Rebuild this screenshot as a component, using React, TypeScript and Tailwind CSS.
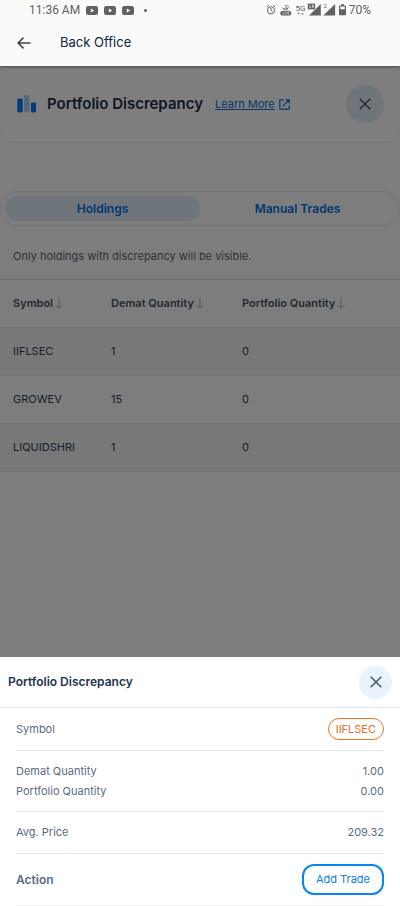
import { useState } from 'react';

const holdings = [
  { symbol: 'IIFLSEC', demat: 1, portfolio: 0 },
  { symbol: 'GROWEV', demat: 15, portfolio: 0 },
  { symbol: 'LIQUIDSHRI', demat: 1, portfolio: 0 },
];

const columns = ['Symbol', 'Demat Quantity', 'Portfolio Quantity'];

function CloseIcon() {
  return (
    <svg width="12" height="12" viewBox="0 0 12 12" fill="none" stroke="#475569" strokeWidth="1.5" aria-hidden="true">
      <path d="M0.7 0.7 11.3 11.3M11.3 0.7 0.7 11.3" />
    </svg>
  );
}

function VideoIcon() {
  return (
    <svg width="12" height="9" viewBox="0 0 12 9" aria-hidden="true">
      <rect width="12" height="9" rx="2.2" fill="#616161" />
      <path d="M4.8 2.5 8.2 4.5 4.8 6.5z" fill="#fafafa" />
    </svg>
  );
}

function SortIcon() {
  return (
    <svg width="8" height="11" viewBox="0 0 8 11" fill="none" stroke="#a3a8b0" strokeWidth="1" className="shrink-0" aria-hidden="true">
      <path d="M4 0V10.2M0.6 7 4 10.3 7.4 7" />
    </svg>
  );
}

function StatusIcons() {
  return (
    <div className="flex items-center gap-[3px]">
      <svg width="80" height="14" viewBox="0 0 80 14" aria-hidden="true">
        {/* alarm */}
        <g fill="none" stroke="#616161" strokeWidth="1">
          <circle cx="5" cy="7.3" r="3.6" />
          <path d="M5 5V7.5L6.6 8.5M0.7 4 2.8 2.2M9.3 4 7.2 2.2" />
        </g>
        {/* volte */}
        <rect x="14.3" y="8" width="11" height="4.5" rx="2" fill="#616161" />
        <path d="M17.3 9.2v2h1.2M19.3 9.3h1.6M20.1 9.3v2M23.2 9.3h-1.3v1.9h1.3" fill="none" stroke="#fafafa" strokeWidth="0.6" />
        <g fill="none" stroke="#616161" strokeWidth="0.8">
          <path d="M16.6 4.6 18 7.2 19.4 4.6M18.6 3Q21.6 1.4 23.6 4.8M20.2 4.6Q21.8 4.4 22 6.5" />
          <circle cx="20.4" cy="6.2" r="0.9" />
        </g>
        {/* mobile data */}
        <text x="29.5" y="8" fontSize="8" fontFamily="Roboto, sans-serif" fill="#616161">5G</text>
        <path d="M31.4 9.8h2.6l-1.3 1.8zM35.2 11.6h2.6l-1.3-1.8z" fill="#616161" />
        {/* sim 1 */}
        <path d="M43 12.5 54.8 0.9V12.5z" fill="#616161" />
        <rect x="41.5" y="0.2" width="8" height="6.5" rx="1.3" fill="#616161" stroke="#fafafa" strokeWidth="0.6" />
        <path d="M43.8 2v2.8h1.4M46.4 4.9V2h1.3v2.8" fill="none" stroke="#fafafa" strokeWidth="0.6" />
        {/* sim 2 */}
        <path d="M57.3 12.5 69.1 0.9V12.5z" fill="#616161" />
        <text x="57.5" y="5.2" fontSize="6" fontFamily="Roboto, sans-serif" fill="#616161">2</text>
        {/* battery */}
        <path d="M75 1.2h3v1.2h1.2q.8 0 .8.8v8.3q0 .8-.8.8h-5.4q-.8 0-.8-.8V3.2q0-.8.8-.8H75z" fill="#616161" />
        <rect x="74.2" y="3.5" width="4.6" height="2.8" fill="#fafafa" />
      </svg>
      <span>70%</span>
    </div>
  );
}

export default function App() {
  const [tab, setTab] = useState<'holdings' | 'manual'>('holdings');
  const [open, setOpen] = useState(true);

  return (
    <div className="flex min-h-screen flex-col bg-[#fafafa] font-['Inter',sans-serif] text-[#1e293b]">
      <header className="z-10 bg-[#fafafa] shadow-[0_1px_3px_rgba(0,0,0,0.45)]">
        <div className="flex h-5 items-center justify-between px-[29px] font-['Roboto',sans-serif] text-xs text-[#616161]">
          <div className="flex items-center gap-1.5">
            <span>11:36 AM</span>
            <VideoIcon />
            <VideoIcon />
            <VideoIcon />
            <span className="ml-1 size-[3px] rounded-full bg-[#616161]" />
          </div>
          <StatusIcons />
        </div>
        <div className="flex h-[46px] items-center gap-7 px-4">
          <button type="button" aria-label="Back" className="flex size-4 items-center justify-center">
            <svg width="14" height="12" viewBox="0 0 14 12" fill="none" stroke="#424242" strokeWidth="1.5" aria-hidden="true">
              <path d="M13.5 6H1.2M6.5 0.6 1.1 6 6.5 11.4" />
            </svg>
          </button>
          <h1 className="text-[13px] text-[#10243e]">Back Office</h1>
        </div>
      </header>

      <div className="relative flex flex-1 flex-col">
        <main className="flex-1 bg-[#fafafa]">
          <div className="flex h-[77px] items-center rounded-b-2xl border-b border-[#e3ecf8] bg-[#fdfdfd] px-4">
            <svg width="20" height="18" viewBox="0 0 20 18" className="mr-2.5 ml-px shrink-0" aria-hidden="true">
              <rect x="0.3" y="3.5" width="5.4" height="14" rx="1.4" fill="#0078f0" />
              <rect x="7" y="0.3" width="5.4" height="17.2" rx="1.4" fill="#aac9f0" />
              <rect x="13.9" y="7.5" width="5.2" height="10" rx="1.4" fill="#0078f0" />
            </svg>
            <h2 className="text-[15px] font-semibold whitespace-nowrap text-[#1c2f45]">Portfolio Discrepancy</h2>
            <a href="#learn" className="ml-3 flex items-center gap-1 text-[11px] whitespace-nowrap text-[#0a6fd8]">
              <span className="underline">Learn More</span>
              <svg width="11" height="11" viewBox="0 0 11 11" fill="none" stroke="currentColor" strokeWidth="1.2" aria-hidden="true">
                <path d="M4.5 0.8H0.8V10.2H10.2V6.5M6.5 0.8H10.2V4.5M10 1 3.7 7.3" />
              </svg>
            </a>
            <button type="button" aria-label="Close page" className="ml-auto flex size-[38px] shrink-0 items-center justify-center rounded-full bg-[#deeaf5]">
              <CloseIcon />
            </button>
          </div>

          <div className="mt-12 flex rounded-full border border-[#deeaf8] p-1 text-xs font-semibold text-[#0070e4]">
            <button
              type="button"
              onClick={() => setTab('holdings')}
              className={`h-[25px] flex-1 rounded-full ${tab === 'holdings' ? 'bg-[#deeaf5]' : ''}`}
            >
              Holdings
            </button>
            <button
              type="button"
              onClick={() => setTab('manual')}
              className={`h-[25px] flex-1 rounded-full ${tab === 'manual' ? 'bg-[#deeaf5]' : ''}`}
            >
              Manual Trades
            </button>
          </div>

          <p className="mt-5 mb-[13px] px-[13px] text-[11px] leading-5 text-[#5b6675]">
            Only holdings with discrepancy will be visible.
          </p>

          <table className="w-full table-fixed border-y border-[#e2e2e4] text-left text-[11px]">
            <colgroup>
              <col className="w-[98px]" />
              <col className="w-[131px]" />
              <col />
            </colgroup>
            <thead>
              <tr className="h-12 text-[#475569]">
                {columns.map((column) => (
                  <th key={column} scope="col" className="pl-[13px] font-semibold whitespace-nowrap">
                    <span className="flex items-center gap-0.5">
                      {column}
                      <SortIcon />
                    </span>
                  </th>
                ))}
              </tr>
            </thead>
            <tbody className="text-[#2c4058]">
              {holdings.map((row) => (
                <tr key={row.symbol} className="h-12 border-t border-[#e8e8ea] odd:bg-[#f0f0f0]">
                  <td className="pl-[13px]">{row.symbol}</td>
                  <td className="pl-[13px]">{row.demat}</td>
                  <td className="pl-[13px]">{row.portfolio}</td>
                </tr>
              ))}
            </tbody>
          </table>
        </main>

        {open && (
          <div className="absolute inset-0 flex flex-col justify-end bg-black/50">
            <section role="dialog" aria-label="Portfolio Discrepancy" className="bg-white text-[11px] text-[#5b6b7d]">
              <div className="flex h-[51px] items-center justify-between border-b border-[#e4e8ec] px-2">
                <h3 className="text-xs font-semibold text-[#1c344e]">Portfolio Discrepancy</h3>
                <button
                  type="button"
                  aria-label="Close"
                  onClick={() => setOpen(false)}
                  className="flex size-[33px] items-center justify-center rounded-full bg-[#e8f3fe]"
                >
                  <CloseIcon />
                </button>
              </div>
              <div className="px-4">
                <div className="flex h-[43px] items-center justify-between border-b border-[#e4e8ec]">
                  <span>Symbol</span>
                  <span className="rounded-full border border-[#e87722] px-[7px] leading-5 text-[#e0701c]">IIFLSEC</span>
                </div>
                <div className="border-b border-[#e8e8ea] py-2.5 leading-5">
                  <div className="flex justify-between">
                    <span>Demat Quantity</span>
                    <span>1.00</span>
                  </div>
                  <div className="flex justify-between">
                    <span>Portfolio Quantity</span>
                    <span>0.00</span>
                  </div>
                </div>
                <div className="flex h-[42px] items-center justify-between border-b border-[#e8e8ea]">
                  <span>Avg. Price</span>
                  <span>209.32</span>
                </div>
                <div className="flex h-[52px] items-center justify-between border-b border-[#eeeeef]">
                  <span className="text-xs font-semibold">Action</span>
                  <button type="button" className="h-[31px] rounded-xl border-2 border-[#0a84f5] px-3 text-[11px] text-[#0a7cec]">
                    Add Trade
                  </button>
                </div>
              </div>
            </section>
          </div>
        )}
      </div>
    </div>
  );
}
